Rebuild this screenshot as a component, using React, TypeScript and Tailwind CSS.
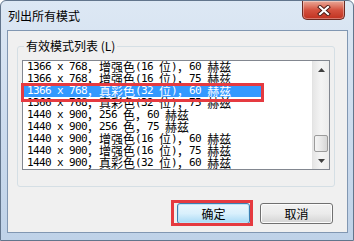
import React from 'react';

type Row = { text: string; selected?: boolean };

const rows: Row[] = [
  { text: '1366 x 768，增强色(16 位)，60 赫兹' },
  { text: '1366 x 768，增强色(16 位)，75 赫兹' },
  { text: '1366 x 768，真彩色(32 位)，60 赫兹', selected: true },
  { text: '1366 x 768，真彩色(32 位)，75 赫兹' },
  { text: '1440 x 900，256 色，60 赫兹' },
  { text: '1440 x 900，256 色，75 赫兹' },
  { text: '1440 x 900，增强色(16 位)，60 赫兹' },
  { text: '1440 x 900，增强色(16 位)，75 赫兹' },
  { text: '1440 x 900，真彩色(32 位)，60 赫兹' },
];

// half-width runs in a mono font, full-width runs in the CJK font (12px per glyph)
const Segments = ({ text }: { text: string }) => (
  <>
    {text
      .split(/([\x00-\x7f]+)/)
      .filter(Boolean)
      .map((s, i) =>
        /^[\x00-\x7f]+$/.test(s) ? (
          <span
            key={i}
            className="h-[12px] leading-[12px] whitespace-pre font-['DejaVu_Sans_Mono',monospace] text-[11px] tracking-[-0.62px]"
          >
            {s}
          </span>
        ) : (
          <span
            key={i}
            className="h-[12px] leading-[12px] whitespace-pre font-['Noto_Sans_CJK_SC',sans-serif] text-[12px]"
          >
            {s}
          </span>
        )
      )}
  </>
);

const CloseButton = () => (
  <div className="w-[43px] h-[19px] rounded-b-[5px] border border-t-0 border-[#6b2a22] bg-gradient-to-b from-[#e8a898] via-[#d4513f] to-[#c0301f] flex items-center justify-center shadow-[inset_0_0_0_1px_rgba(255,255,255,0.35)]">
    <svg width="14" height="11" viewBox="0 0 14 11">
      <path d="M3 2 L11 9 M11 2 L3 9" stroke="#4a1a14" strokeWidth="4" strokeLinecap="square" />
      <path d="M3 2 L11 9 M11 2 L3 9" stroke="#ffffff" strokeWidth="2.2" strokeLinecap="square" />
    </svg>
  </div>
);

const ScrollBar = () => (
  <div className="w-[17px] h-full flex flex-col bg-gradient-to-r from-[#e6e6e6] via-[#f4f4f4] to-[#ececec] border-l border-[#e3e3e3]">
    <div className="h-[17px] flex items-center justify-center">
      <svg width="7" height="4" viewBox="0 0 7 4">
        <path d="M0 4 L3.5 0 L7 4 Z" fill="#404040" />
      </svg>
    </div>
    <div className="flex-1" />
    <div className="h-[17px] mx-[1px] rounded-[2px] border border-[#9b9b9b] bg-gradient-to-r from-[#f4f4f4] via-[#e8e8e8] to-[#d6d6d6]" />
    <div className="h-[17px] flex items-center justify-center">
      <svg width="7" height="4" viewBox="0 0 7 4">
        <path d="M0 0 L7 0 L3.5 4 Z" fill="#404040" />
      </svg>
    </div>
  </div>
);

const Button = ({ label, isDefault }: { label: string; isDefault?: boolean }) => (
  <div
    className={`w-[73px] h-[21px] rounded-[3px] border flex items-center justify-center text-[12px] text-black font-['Noto_Sans_CJK_SC',sans-serif] ${
      isDefault
        ? 'border-[#3c7fb1] bg-gradient-to-b from-[#eaf6fd] via-[#d9f0fc] to-[#a7d9f5] shadow-[inset_0_0_0_1px_#bde4f8]'
        : 'border-[#707070] bg-gradient-to-b from-[#f2f2f2] via-[#ebebeb] to-[#d3d3d3] shadow-[inset_0_0_0_1px_#fcfcfc]'
    }`}
  >
    {label}
  </div>
);

export default function App() {
  return (
    <div className="w-[354px] h-[241px] flex flex-col bg-gradient-to-b from-[#dde8f4] via-[#cddcee] to-[#bfd2e8] border border-[#62758c] rounded-t-[6px] overflow-hidden">
      {/* Title bar */}
      <div className="h-[29px] flex items-start justify-between">
        <div className="h-[29px] flex items-center pl-[7px] text-[12px] text-black font-['Noto_Sans_CJK_SC',sans-serif]">
          列出所有模式
        </div>
        <div className="mr-[8px]">
          <CloseButton />
        </div>
      </div>

      {/* Client area */}
      <div className="flex-1 ml-[6px] mr-[5px] mb-[7px] border border-[#8197b2] bg-[#f0f0f0] flex flex-col">
        {/* Group box */}
        <div className="relative mt-[15px] ml-[9px] w-[318px] h-[141px] border border-[#d5dfe5] rounded-[3px]">
          <span className="absolute -top-[9px] left-[6px] px-[2px] bg-[#f0f0f0] text-[12px] leading-[16px] text-black font-['Noto_Sans_CJK_SC',sans-serif]">
            有效模式列表 (L)
          </span>

          {/* List box */}
          <div className="relative mt-[13px] ml-[4px] w-[308px] h-[110px] border border-[#828790] bg-white flex">
            <div className="flex-1 flex flex-col">
              {rows.map((r, i) => (
                <div
                  key={i}
                  className={`h-[12px] flex items-center pl-[4px] ${
                    r.selected ? 'w-[238px] bg-[#3399ff] text-white' : 'text-black'
                  }`}
                >
                  <Segments text={r.text} />
                </div>
              ))}
            </div>
            <ScrollBar />

            {/* highlight annotation */}
            <div className="absolute left-[-2px] top-[22px] w-[243px] h-[19px] border-[3px] border-[#e53a40]" />
          </div>
        </div>

        {/* Buttons */}
        <div className="mt-[16px] flex justify-end gap-[10px] pr-[14px]">
          <div className="relative">
            <Button label="确定" isDefault />
            <div className="absolute left-[-6px] top-[-3px] w-[82px] h-[26px] border-[3px] border-[#e53a40]" />
          </div>
          <Button label="取消" />
        </div>
      </div>
    </div>
  );
}
